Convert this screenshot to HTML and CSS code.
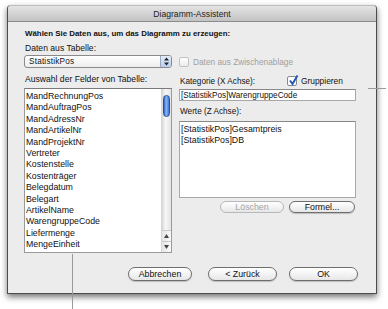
FILE: index.html
```html
<!DOCTYPE html>
<html lang="de">
<head>
<meta charset="UTF-8" />
<title>Diagramm-Assistent</title>
<link rel="stylesheet" href="styles.css">
</head>
<body>
  <div class="window" role="dialog" aria-label="Diagramm-Assistent">
    <div class="titlebar">Diagramm-Assistent</div>
    <div class="content">
      <div class="heading">Wählen Sie Daten aus, um das Diagramm zu erzeugen:</div>
      <div class="label">Daten aus Tabelle:</div>
      <div class="source-row">
        <div class="popup">
          <span class="popup-value">StatistikPos</span>
          <span class="popup-arrows">
            <svg width="7" height="9" viewBox="0 0 7 9"><path d="M3.5 0.5 L6 3.5 L1 3.5 Z M3.5 8.5 L6 5.5 L1 5.5 Z" fill="#222"/></svg>
          </span>
        </div>
        <label class="check disabled"><span class="box"></span>Daten aus Zwischenablage</label>
      </div>

      <div class="columns">
        <div class="col-left">
          <div class="label">Auswahl der Felder von Tabelle:</div>
          <div class="listbox">
            <ul class="items">
              <li>MandRechnungPos</li>
              <li>MandAuftragPos</li>
              <li>MandAdressNr</li>
              <li>MandArtikelNr</li>
              <li>MandProjektNr</li>
              <li>Vertreter</li>
              <li>Kostenstelle</li>
              <li>Kostenträger</li>
              <li>Belegdatum</li>
              <li>Belegart</li>
              <li>ArtikelName</li>
              <li>WarengruppeCode</li>
              <li>Liefermenge</li>
              <li>MengeEinheit</li>
            </ul>
            <div class="scrollbar">
              <div class="track"><div class="thumb"></div></div>
              <div class="arrow">
                <svg width="5" height="4" viewBox="0 0 5 4"><path d="M2.5 0 L5 4 L0 4 Z" fill="#444"/></svg>
              </div>
              <div class="arrow">
                <svg width="5" height="4" viewBox="0 0 5 4"><path d="M0 0 L5 0 L2.5 4 Z" fill="#444"/></svg>
              </div>
            </div>
          </div>
        </div>

        <div class="col-right">
          <div class="cat-row">
            <span class="label">Kategorie (X Achse):</span>
            <label class="check">
              <span class="box">
                <svg class="tick" width="11" height="11" viewBox="0 0 11 11"><path d="M2 5.5 L4.5 9 L9.5 0.5" fill="none" stroke="#2857b8" stroke-width="2"/></svg>
              </span>Gruppieren
            </label>
          </div>
          <div class="field">[StatistikPos]WarengruppeCode</div>
          <div class="label values-label">Werte (Z Achse):</div>
          <div class="area">
            <div>[StatistikPos]Gesamtpreis</div>
            <div>[StatistikPos]DB</div>
          </div>
          <div class="btn-row">
            <button type="button" class="btn btn-small" disabled>Löschen</button>
            <button type="button" class="btn btn-small formel">Formel...</button>
          </div>
        </div>
      </div>

      <div class="footer">
        <button type="button" class="btn abbrechen">Abbrechen</button>
        <button type="button" class="btn zurueck">&lt; Zurück</button>
        <button type="button" class="btn ok">OK</button>
      </div>
    </div>
  </div>

  <!-- callout lines -->
  <div class="leader leader-h"></div>
  <div class="leader leader-v"></div>
</body>
</html>
```

FILE: styles.css
```css
* {
  box-sizing: border-box;
}
body {
  margin: 0;
  background: #fff;
  font-family: "Liberation Sans", Arial, sans-serif;
  font-size: 8.6px;
  color: #111;
  position: relative;
  height: 309px;
  overflow: hidden;
}
.window {
  margin: 5px 0 0 7px;
  width: 370px;
  height: 289px;
  background: #ececec;
  border: 1px solid #4c4c4c;
  border-top: none;
  border-radius: 4px 4px 0 0;
  box-shadow: 0 3px 6px rgba(0, 0, 0, 0.55);
}
.titlebar {
  height: 17px;
  line-height: 16px;
  text-align: center;
  color: #222;
  font-size: 8.6px;
  background: linear-gradient(#e4e4e4, #c2c2c2);
  border-bottom: 1px solid #8c8c8c;
  border-top: 1px solid #bdbdbd;
  border-radius: 4px 4px 0 0;
}
.content {
  padding: 6px 20px 0 16px;
}
.heading {
  font-weight: bold;
  font-size: 7.9px;
  line-height: 12px;
  padding-left: 1px;
}
.label {
  line-height: 12px;
  padding-left: 1px;
}
.heading + .label {
  margin-top: 2px;
}
.source-row {
  display: flex;
  align-items: center;
  gap: 7px;
  margin-top: 1px;
}
.popup {
  width: 148px;
  height: 13px;
  display: flex;
  align-items: center;
  justify-content: space-between;
  background: linear-gradient(#ffffff, #ededed);
  border: 1px solid #8a8a8a;
  border-radius: 3px;
  padding-left: 4px;
}
.popup-value {
  font-size: 8.2px;
  letter-spacing: 0.2px;
}
.popup-arrows {
  width: 11px;
  height: 11px;
  display: flex;
  align-items: center;
  justify-content: center;
  background: linear-gradient(#e4eefb, #b9cfee);
  border-left: 1px solid #9aa9c0;
  border-radius: 0 2px 2px 0;
}
.check {
  display: flex;
  align-items: center;
  gap: 4px;
  line-height: 12px;
}
.check .box {
  width: 10px;
  height: 10px;
  background: linear-gradient(#fff, #ececec);
  border: 1px solid #888;
  border-radius: 2px;
  position: relative;
}
.check.disabled {
  color: #a0a0a0;
  font-size: 8.3px;
}
.check.disabled .box {
  border-color: #c2c2c2;
}
.tick {
  position: absolute;
  left: 0;
  top: -2px;
}
.columns {
  display: grid;
  grid-template-columns: 148px 177px;
  gap: 7px;
  margin-top: 5px;
}
.listbox {
  margin-top: 3px;
  height: 165px;
  display: flex;
  background: #fff;
  border: 1px solid #9a9a9a;
  border-top-color: #7a7a7a;
}
.items {
  list-style: none;
  margin: 0;
  padding: 2px 0 0 1px;
  flex: 1;
  overflow: hidden;
}
.items li {
  line-height: 11.4px;
  font-size: 8.8px;
}
.scrollbar {
  width: 10px;
  display: flex;
  flex-direction: column;
  background: #f2f2f2;
  border-left: 1px solid #d6d6d6;
}
.track {
  flex: 1;
  background: linear-gradient(90deg, #d9d9d9, #f7f7f7 40%, #e4e4e4);
  padding: 6px 1px 0 1px;
}
.thumb {
  height: 22px;
  width: 7px;
  border-radius: 4px;
  background: linear-gradient(90deg, #2d62c8, #8fb8f0 45%, #3b74d6);
  border: 1px solid #2a4f96;
}
.arrow {
  height: 11px;
  display: flex;
  align-items: center;
  justify-content: center;
  border-top: 1px solid #c8c8c8;
  background: linear-gradient(90deg, #e6e6e6, #fafafa);
}
.cat-row {
  display: grid;
  grid-template-columns: 108px auto;
  align-items: center;
  height: 15px;
}
.cat-row .label {
  font-size: 8.2px;
  padding-top: 3px;
}
.cat-row .check .box {
  background: #fff;
}
.cat-row .check {
  font-size: 8.4px;
}
.field {
  margin-top: 1px;
  height: 12px;
  line-height: 11px;
  background: #fff;
  border: 1px solid #a8a8a8;
  border-top-color: #888;
  padding-left: 1px;
  font-size: 8.2px;
}
.values-label {
  margin-top: 5px;
  font-size: 8.2px;
}
.area {
  margin-top: 3px;
  height: 77px;
  background: #fff;
  border: 1px solid #a8a8a8;
  border-top-color: #888;
  padding: 2px 0 0 1px;
  line-height: 11px;
  font-size: 8.8px;
}
.btn-row {
  display: flex;
  justify-content: flex-end;
  gap: 5px;
  margin-top: 3px;
  margin-right: 1px;
}
.btn {
  font-family: inherit;
  font-size: 8.8px;
  color: #111;
  height: 14px;
  padding: 0;
  background: linear-gradient(#ffffff, #f1f1f1 60%, #e6e6e6);
  border: 1px solid #6e6e6e;
  border-radius: 7px;
  box-shadow: 0 1px 1px rgba(0, 0, 0, 0.2);
  line-height: 12px;
}
.btn-small {
  height: 12px;
  line-height: 10px;
  border-radius: 6px;
}
.btn-small[disabled] {
  width: 64px;
  color: #a6a6a6;
  border-color: #b8b8b8;
  box-shadow: none;
}
.formel {
  width: 66px;
}
.footer {
  display: flex;
  justify-content: flex-end;
  margin-top: 14px;
  margin-right: -2px;
}
.abbrechen {
  width: 64px;
}
.zurueck {
  width: 69px;
  margin-left: 16px;
}
.ok {
  width: 69px;
  margin-left: 12px;
}
.leader {
  position: absolute;
  background: #9a9a9a;
}
.leader-h {
  left: 368px;
  top: 88px;
  width: 18px;
  height: 1px;
}
.leader-v {
  left: 72px;
  top: 254px;
  width: 1px;
  height: 55px;
}
```
